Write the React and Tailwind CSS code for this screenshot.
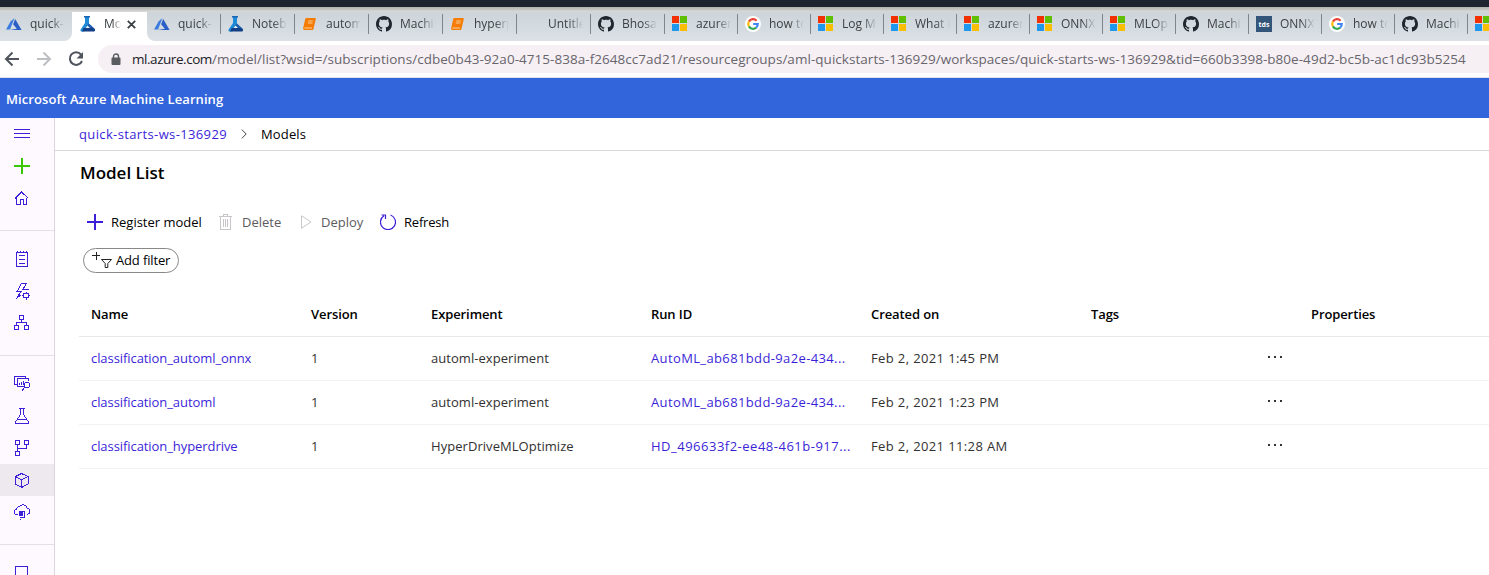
import React from "react";

const AzureIcon = () => (
  <svg width="16" height="16" viewBox="0 0 16 16">
    <path d="M8.5 2 4.5 5.5 0 13.5h4z" fill="#3b7be0" />
    <path d="M9.2 3 15.6 14H3.8l7-1.3-3.7-4.4z" fill="#2b5fc8" />
  </svg>
);

const FlaskLogo = () => (
  <svg width="16" height="16" viewBox="0 0 16 16">
    <path d="M5 1h4v7L4 15.6H1.6Q-.2 15.2.8 13.2L5 7z" fill="#1f8ad8" />
    <path d="M9 7.4 15 13q.6 2-1 2.6L6.4 10z" fill="#1c5cae" />
    <path d="M3.6 12h8.8l2.2 1.4q.4 1.8-1 2.2H2z" fill="#123f86" />
    <path d="M4 0h6v1.6H4z" fill="#1a66b8" />
    <path d="M7.500 9.500 9.800 12H5.800z" fill="#f4f7fb" />
  </svg>
);

const BookIcon = () => (
  <svg width="16" height="16" viewBox="0 0 16 16">
    <path d="M4.4 2H13q1 0 .8 1l-2.4 10.2q-.2.8-1 .8H2.2q-1.4-.4-1-2L3.2 3q.3-1 1.2-1z" fill="#f57c00" />
    <path d="M6.200 5h4.600M5.800 7h4.600M2.400 12h7.600" stroke="#fbe3c8" strokeWidth=".8" fill="none" />
  </svg>
);

const GithubIcon = () => (
  <svg width="16" height="16" viewBox="0 0 16 16" fill="#20262d">
    <path d="M8 0C3.58 0 0 3.58 0 8c0 3.54 2.29 6.53 5.47 7.59.4.07.55-.17.55-.38 0-.19-.01-.82-.01-1.49-2.01.37-2.53-.49-2.69-.94-.09-.23-.48-.94-.82-1.13-.28-.15-.68-.52-.01-.53.63-.01 1.08.58 1.23.82.72 1.21 1.87.87 2.33.66.07-.52.28-.87.51-1.07-1.78-.2-3.64-.89-3.64-3.95 0-.87.31-1.59.82-2.15-.08-.2-.36-1.02.08-2.12 0 0 .67-.21 2.2.82.64-.18 1.32-.27 2-.27s1.36.09 2 .27c1.53-1.04 2.2-.82 2.2-.82.44 1.1.16 1.92.08 2.12.51.56.82 1.27.82 2.15 0 3.07-1.87 3.75-3.65 3.95.29.25.54.73.54 1.48 0 1.07-.01 1.93-.01 2.2 0 .21.15.46.55.38A8.01 8.01 0 0 0 16 8c0-4.42-3.58-8-8-8z" />
  </svg>
);

const MicrosoftIcon = () => (
  <svg width="16" height="16" viewBox="0 0 16 16" shapeRendering="crispEdges">
    <path d="M0 0h7v7H0z" fill="#f23000" />
    <path d="M8 0h7v7H8z" fill="#5fbf00" />
    <path d="M0 8h7v7H0z" fill="#1e97ec" />
    <path d="M8 8h7v7H8z" fill="#fbbd00" />
  </svg>
);

const GoogleIcon = () => (
  <svg width="16" height="16" viewBox="0 0 16 16" fill="none" strokeWidth="2.2">
    <circle cx="8" cy="8" r="8" fill="#fff" />
    <path d="M11.6 4.7A4.8 4.8 0 0 0 3.9 5.6" stroke="#ea4335" />
    <path d="M3.9 5.6a4.8 4.8 0 0 0 0 4.8" stroke="#fbbc05" />
    <path d="M3.9 10.4a4.8 4.8 0 0 0 7.3 1.2" stroke="#34a853" />
    <path d="M11.2 11.6A4.8 4.8 0 0 0 12.8 8H8.2" stroke="#4285f4" />
  </svg>
);

const TdsIcon = () => (
  <span className="flex h-4 w-4 items-center justify-center bg-[#33557a] text-[7px] font-bold leading-none text-white">tds</span>
);

const tabs = [
  [AzureIcon, "quick-", "w-[74px]"],
  [FlaskLogo, "Mo", "w-[75px]"],
  [AzureIcon, "quick-", "w-[73px]"],
  [FlaskLogo, "Notebo", "w-[74px]"],
  [BookIcon, "autom", "w-[74px]"],
  [GithubIcon, "Machin", "w-[74px]"],
  [BookIcon, "hyperp", "w-[74px]"],
  [null, "Untitle", "w-[74px]"],
  [GithubIcon, "Bhosal", "w-[74px]"],
  [MicrosoftIcon, "azurem", "w-[73px]"],
  [GoogleIcon, "how to", "w-[73px]"],
  [MicrosoftIcon, "Log M", "w-[73px]"],
  [MicrosoftIcon, "What i", "w-[73px]"],
  [MicrosoftIcon, "azurem", "w-[73px]"],
  [MicrosoftIcon, "ONNX", "w-[73px]"],
  [MicrosoftIcon, "MLOp", "w-[73px]"],
  [GithubIcon, "Machi", "w-[73px]"],
  [TdsIcon, "ONNX", "w-[73px]"],
  [GoogleIcon, "how to", "w-[73px]"],
  [GithubIcon, "Machi", "w-[73px]"],
  [MicrosoftIcon, "", "w-[73px]"],
];

function Tab({ icon: Icon, label, width, index }) {
  const active = index === 1;
  const shape = active
    ? "bg-white rounded-t-lg"
    : index === 0
      ? "bg-gradient-to-b from-[#cdd4da] to-[#dbe1e5] rounded-br-lg"
      : index === 2
        ? "bg-gradient-to-b from-[#cdd4da] to-[#dbe1e5] rounded-bl-lg"
        : "bg-gradient-to-b from-[#cdd4da] to-[#dbe1e5]";
  return (
    <div className={`flex h-[29px] shrink-0 items-start ${width} ${shape}`}>
      <div className={`mt-[2px] h-5 w-px shrink-0 ${index > 2 ? "bg-[#81868b]" : ""}`} />
      <div className={`mt-1 h-4 w-4 shrink-0 ${index === 2 ? "ml-[6px]" : "ml-[7px]"}`}>{Icon && <Icon />}</div>
      <div
        className={`ml-2 mt-[2px] overflow-hidden whitespace-nowrap text-[12px] leading-5 text-[#3c4043] ${
          active
            ? "w-[17px] [mask-image:linear-gradient(to_right,black_50%,transparent)]"
            : "w-[35px] [mask-image:linear-gradient(to_right,black_60%,transparent)]"
        }`}
      >
        {label}
      </div>
      {active && (
        <svg className="ml-[6px] mt-2 shrink-0" width="9" height="9" viewBox="0 0 9 9">
          <path d="M.8.8l7.4 7.4M8.2.8.8 8.2" stroke="#3c4043" strokeWidth="1.8" />
        </svg>
      )}
    </div>
  );
}

function Browser() {
  return (
    <>
      <div className="h-[7px] bg-[#1e2430]" />
      <div className="h-[5px] bg-gradient-to-b from-[#aeb0ae] to-[#dcdcdb]" />
      <div className="-ml-[2px] flex h-[29px] bg-white">
        {tabs.map(([icon, label, width], i) => (
          <Tab key={i} icon={icon} label={label} width={width} index={i} />
        ))}
      </div>
      <div className="flex h-[37px] items-center border-b border-[#dfe0e8] bg-white">
        <svg className="shrink-0" width="98" height="36" viewBox="0 0 98 36" fill="none" strokeWidth="2">
          <path d="M19 18H6M12.5 11.5 6 18l6.5 6.5" stroke="#50545c" />
          <path d="M37 18h13M43.500 11.500 50 18l-6.500 6.500" stroke="#bdbfc2" />
          <path d="M81 13.500A6.300 6.300 0 1 0 82 20" stroke="#50545c" />
          <path d="M83 11v6.500h-6.500z" fill="#50545c" />
        </svg>
        <div className="flex h-7 flex-1 items-center overflow-hidden whitespace-nowrap rounded-l-full bg-[#f6f0f5] pl-[13px]">
          <svg className="shrink-0" width="10" height="13" viewBox="0 0 10 13">
            <path d="M2.500 5.500V3.500a2.500 2.500 0 0 1 5 0v2" stroke="#5a5c60" strokeWidth="1.400" fill="none" />
            <rect x=".5" y="4.500" width="9" height="7.500" rx="1" fill="#5a5c60" />
          </svg>
          <span className="ml-[11px] text-[13.5px] leading-5 tracking-[0.04px] text-[#68656c]">
            <span className="tracking-[-0.45px] text-[#202124]">ml.azure.com</span>
            /model/list?wsid=/subscriptions/cdbe0b43-92a0-4715-838a-f2648cc7ad21/resourcegroups/aml-quickstarts-136929/workspaces/quick-starts-ws-136929&amp;tid=660b3398-b80e-49d2-bc5b-ac1dc93b5254
          </span>
        </div>
      </div>
    </>
  );
}

const navPaths = {
  menu: <path d="M2 5.500h16M2 9.500h16M2 13.500h16" />,
  home: <path d="M3 10.500 9.500 4l7 6.500M4.500 9.500v7h3.500v-5h3v5h3.500v-7" />,
  notes: <path d="M4.500 3.500h11v14h-11zM7 6.500h6M7 10.500h6M7 14.500h6M5.500 2v2M8.500 2v2M11.500 2v2M14.500 2v2" />,
  bolt: (
    <>
      <path d="M9.500 2.500h5l-3.500 5.500h5.500M9.500 2.500 5 10.500h4l-4.500 7 4-3.500" />
      <circle cx="14" cy="14.500" r="2.500" />
      <path d="M14 10.500V12M14 17v1.500M10 14.500h1.500M16.500 14.500H18M11.300 11.800l1 1M15.700 16.200l1 1M16.700 11.800l-1 1M12.300 16.200l-1 1" />
    </>
  ),
  tree: <path d="M7.500 2.500h4v4h-4zM2.500 12.500h4v4h-4zM12.500 12.500h4v4h-4zM9.500 6.500v3M4.500 12.500v-3h10v3" />,
  charts: (
    <>
      <path d="M13.500 4.500v-2h-11v8h2M12 12.500H5.500v-8h11V7M7.500 11v-2M9.500 11V8M11.500 11V7" />
      <circle cx="15" cy="11" r="2.700" />
      <path d="M13 13l-3.500 4.500" />
    </>
  ),
  flask: <path d="M7 2.500h6M8.500 2.500v6l-5 7.500q-.3 1.500 1 1.500h11q1.300 0 1-1.500l-5-7.500v-6M5.500 13.500h9" />,
  branch: <path d="M3.500 2.500h4v4h-4zM12.500 2.500h4v4h-4zM3.500 13.500h4v4h-4zM5.500 6.500v7M5.500 10.500h9v-4" />,
  cube: <path d="M9.500 3.500l6.500 3v7.500l-6.500 3.500L3.500 14V6.500zM3.500 6.500l6 3.500 6.500-3.500M9.500 10v7.500" />,
  cloud: (
    <>
      <path d="M6 12.500H5a2.500 2.500 0 0 1-.5-5 3 3 0 0 1 3-3 4.200 4.200 0 0 1 7.500 1.500 3.400 3.400 0 0 1 .5 6.500H14.500" />
      <path d="M6.500 9.500h6M6.500 12.500h2M12.500 10v5h-5M8.500 16.500v1" />
      <path d="M7 10h4v4H7z" fill="currentColor" stroke="none" />
    </>
  ),
  screen: <path d="M3.500 3.500h12v9h-12zM7 15.500h5" />,
};

function NavItem({ name, selected = false }) {
  return (
    <div className={`flex h-8 shrink-0 items-center pl-3 ${selected ? "bg-[#eee9ee]" : ""}`}>
      <svg width="20" height="20" viewBox="0 0 20 20" fill="none" stroke="currentColor" strokeWidth="1" shapeRendering="crispEdges">
        {navPaths[name]}
      </svg>
    </div>
  );
}

const Divider = () => <div className="mb-3 mt-4 h-px shrink-0 bg-[#e3dfe5]" />;

function Sidebar() {
  return (
    <nav className="flex w-[55px] shrink-0 flex-col overflow-hidden border-r border-[#dad6dc] bg-[#fdf9ff] text-[#3c1fd8]">
      <NavItem name="menu" />
      <div className="flex h-8 shrink-0 items-center pl-3 text-[#36c800]">
        <svg width="20" height="20" viewBox="0 0 20 20" shapeRendering="crispEdges">
          <path d="M2 10h16M10 2v16" stroke="currentColor" strokeWidth="2" />
        </svg>
      </div>
      <NavItem name="home" />
      <Divider />
      <NavItem name="notes" />
      <NavItem name="bolt" />
      <NavItem name="tree" />
      <Divider />
      <NavItem name="charts" />
      <NavItem name="flask" />
      <NavItem name="branch" />
      <NavItem name="cube" selected />
      <NavItem name="cloud" />
      <Divider />
      <NavItem name="screen" />
    </nav>
  );
}

function Commands() {
  return (
    <div className="mt-[26px] flex h-6 items-center pl-2 text-black">
      <svg width="16" height="16" viewBox="0 0 16 16" shapeRendering="crispEdges">
        <path d="M0 8h16M8 0v16" stroke="#3c1fd8" strokeWidth="2" />
      </svg>
      <span className="ml-2 w-[108px] pt-px">Register model</span>
      <svg width="13" height="16" viewBox="0 0 13 16" fill="none" stroke="#c8c6c8" shapeRendering="crispEdges">
        <path d="M0 2.500h13M4.500 2V.5h4V2M1.500 3v12.500h10V3M4.500 5v8M6.500 5v8M8.500 5v8" />
      </svg>
      <span className="ml-[10px] w-[59px] pt-px text-[#5d5b5d]">Delete</span>
      <svg width="11" height="14" viewBox="0 0 11 14" fill="none" stroke="#c8c6c8">
        <path d="M.5.8v12.400L10 7z" />
      </svg>
      <span className="ml-[9px] w-[59px] pt-px text-[#5d5b5d]">Deploy</span>
      <svg width="16" height="16" viewBox="0 0 16 16" fill="none" stroke="#3c1fd8" strokeWidth="1.200">
        <path d="M10.500 1A7.500 7.500 0 1 1 4 1.700M1.500 1h4v4" />
      </svg>
      <span className="ml-2 pt-px tracking-[-0.2px]">Refresh</span>
    </div>
  );
}

const models = [
  ["classification_automl_onnx", "automl-experiment", "AutoML_ab681bdd-9a2e-434...", "Feb 2, 2021 1:45 PM", "tracking-[0.37px]"],
  ["classification_automl", "automl-experiment", "AutoML_ab681bdd-9a2e-434...", "Feb 2, 2021 1:23 PM", "tracking-[0.37px]"],
  ["classification_hyperdrive", "HyperDriveMLOptimize", "HD_496633f2-ee48-461b-917...", "Feb 2, 2021 11:28 AM", "tracking-[0.5px]"],
];

const columns = "grid grid-cols-[220px_120px_220px_220px_220px_220px_1fr] items-center pl-3";

function ModelTable() {
  return (
    <div className="mt-[19px] whitespace-nowrap">
      <div className={`${columns} h-[45px] border-b border-[#ebe6e8] pt-px text-[13px] font-semibold tracking-[-0.1px] text-black`}>
        <span>Name</span>
        <span>Version</span>
        <span>Experiment</span>
        <span>Run ID</span>
        <span>Created on</span>
        <span>Tags</span>
        <span>Properties</span>
      </div>
      {models.map(([name, experiment, run, created, runTracking]) => (
        <div key={name} className={`${columns} h-11 border-b border-[#f3f1f3] text-[#323130]`}>
          <span className="tracking-[-0.07px] text-[#3c1fd8]">{name}</span>
          <span>1</span>
          <span className="tracking-[0.05px]">{experiment}</span>
          <span className={`text-[#3c1fd8] ${runTracking}`}>{run}</span>
          <span className="tracking-[0.38px]">{created}</span>
          <svg className="ml-44 -mt-1" width="16" height="4" viewBox="0 0 16 4" fill="#323130" shapeRendering="crispEdges">
            <path d="M1 1h2v2H1zM7 1h2v2H7zM13 1h2v2h-2z" />
          </svg>
        </div>
      ))}
    </div>
  );
}

export default function App() {
  return (
    <div className="flex h-[575px] w-[1489px] flex-col overflow-hidden bg-white font-['Open_Sans','Noto_Sans',sans-serif] text-[13px]">
      <Browser />
      <header className="flex h-10 shrink-0 items-center bg-[#3264db] pl-[6px] pt-[3px] text-[13px] font-semibold tracking-[0.08px] text-white">
        Microsoft Azure Machine Learning
      </header>
      <div className="flex min-h-0 flex-1">
        <Sidebar />
        <main className="min-w-0 flex-1">
          <div className="flex h-[33px] items-center border-b border-[#dad6dc] pl-6">
            <span className="w-[162px] pt-px tracking-[0.37px] text-[#3c1fd8]">quick-starts-ws-136929</span>
            <svg width="6" height="10" viewBox="0 0 6 10" fill="none" stroke="#444">
              <path d="M.8.600 5.200 5 .8 9.400" />
            </svg>
            <span className="ml-[14px] pt-px tracking-[0.15px] text-black">Models</span>
          </div>
          <div className="pl-6">
            <h1 className="mt-[10px] h-6 pl-px text-[17px] font-semibold leading-6 text-black">Model List</h1>
            <div className="-mt-[1px]">
              <Commands />
            </div>
            <button className="ml-1 mt-[14px] flex h-[25px] w-[96px] items-center rounded-full border border-[#8a8886] pl-2 text-black">
              <svg className="shrink-0 -mt-px" width="21" height="18" viewBox="0 0 21 18" fill="none" stroke="#222">
                <path d="M0 4.500h8M4.500 .5v8" shapeRendering="crispEdges" />
                <path d="M9.500 8.500h10l-3.700 4v4h-2.600v-4z" />
              </svg>
              <span className="ml-[3px] whitespace-nowrap pt-px tracking-[-0.15px]">Add filter</span>
            </button>
            <ModelTable />
          </div>
        </main>
      </div>
    </div>
  );
}
